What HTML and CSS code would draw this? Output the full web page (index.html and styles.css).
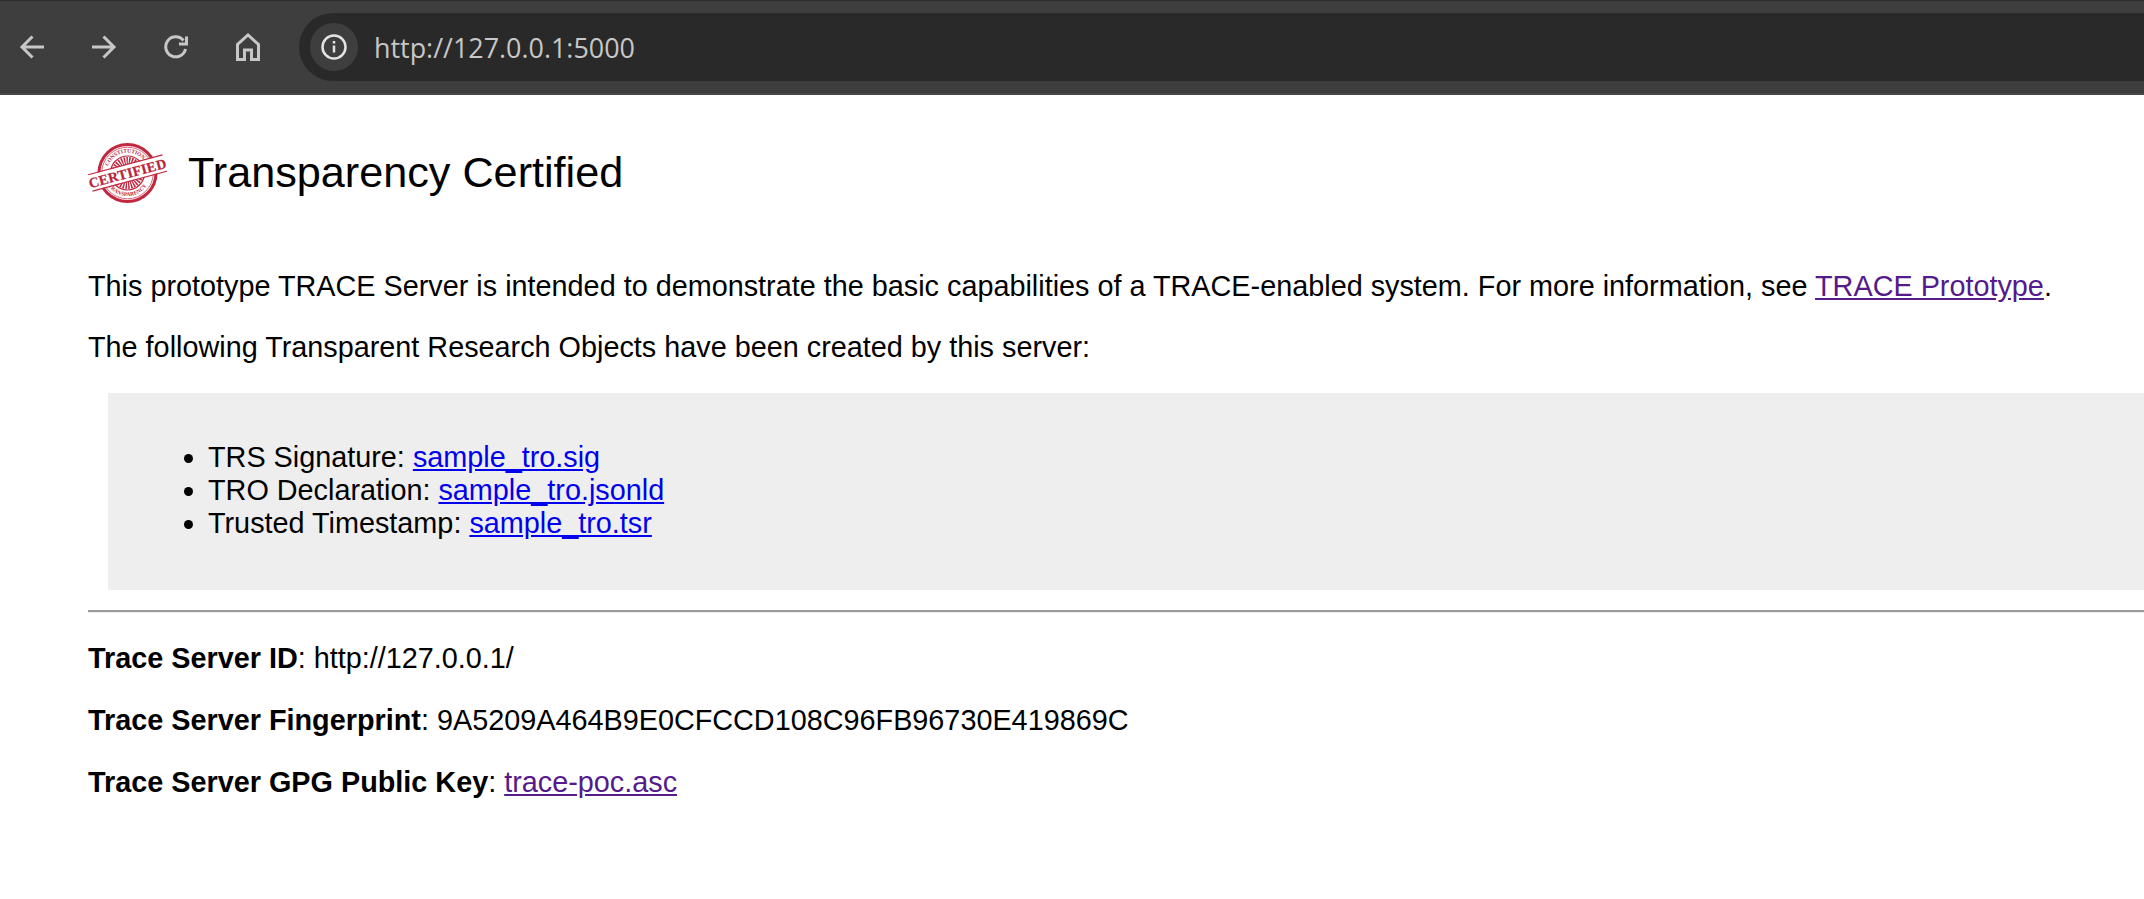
FILE: index.html
```html
<!DOCTYPE html>
<html lang="en">
<head>
<meta charset="utf-8">
<title>Transparency Certified</title>
<link rel="stylesheet" href="styles.css">
</head>
<body>
<header class="toolbar">
  <nav class="nav-icons">
    <svg class="nav-icon" viewBox="0 0 28 28"><path d="M26 14H5M14.500 3.500 4 14l10.500 10.500"/></svg>
    <svg class="nav-icon" viewBox="0 0 28 28"><path d="M2 14h21M13.500 3.500 24 14 13.500 24.500"/></svg>
    <svg class="nav-icon" viewBox="0 0 28 28"><path d="M21.500 7.500A10 10 0 1 0 23.500 16M24.500 3.500v7.500h-7.500"/></svg>
    <svg class="nav-icon" viewBox="0 0 28 28"><path d="M3.500 26.500V11.500L14 2 24.500 11.500V26.500H17.500V17H10.500V26.500Z"/></svg>
  </nav>
  <div class="urlbar">
    <span class="info"><svg class="info-icon" viewBox="0 0 28 28"><circle cx="14" cy="14" r="11.500"/><path d="M14 12.500v7M14 8v2.500"/></svg></span>
    <span class="url">http://127.0.0.1:5000</span>
  </div>
</header>
<main class="content">
  <div class="title-row">
    <svg class="seal" viewBox="0 0 80 70">
      <circle class="seal-ring" cx="39.500" cy="35" r="28.500"/>
      <circle class="seal-ring-thin" cx="39.500" cy="35" r="25.800"/>
      <circle class="seal-ring-inner" cx="39.500" cy="35" r="17"/>
      <circle class="seal-rays" cx="39.500" cy="35" r="10"/>
      <circle class="seal-core" cx="39.500" cy="35" r="4"/>
      <path id="seal-top" class="seal-arc" d="M19 35a20.500 20.500 0 0 1 41 0"/>
      <path id="seal-bottom" class="seal-arc" d="M16.500 35a23 23 0 0 0 46 0"/>
      <text class="seal-small"><textPath href="#seal-top" startOffset="50%" text-anchor="middle">CONSTITUTIONAL</textPath></text>
      <text class="seal-small"><textPath href="#seal-bottom" startOffset="50%" text-anchor="middle">TRANSPARENCY</textPath></text>
      <g transform="rotate(-15 39.500 35)">
        <rect class="seal-band" x="2" y="27" width="75" height="16"/>
        <path class="seal-line" d="M1 26.500h77M1 43.500h77"/>
        <text class="seal-text" x="39.500" y="40" text-anchor="middle">CERTIFIED</text>
      </g>
    </svg>
    <h1 class="title">Transparency Certified</h1>
  </div>
  <p class="para intro">This prototype TRACE Server is intended to demonstrate the basic capabilities of a TRACE-enabled system. For more information, see <a class="visited" href="#a">TRACE Prototype</a>.</p>
  <p class="para">The following Transparent Research Objects have been created by this server:</p>
  <div class="panel">
    <ul class="files">
      <li>TRS Signature: <a class="fresh" href="#b">sample_tro.sig</a></li>
      <li>TRO Declaration: <a class="fresh" href="#c">sample_tro.jsonld</a></li>
      <li>Trusted Timestamp: <a class="fresh" href="#d">sample_tro.tsr</a></li>
    </ul>
  </div>
  <hr class="rule">
  <p class="para"><strong>Trace Server ID</strong>: http://127.0.0.1/</p>
  <p class="para"><strong>Trace Server Fingerprint</strong>: 9A5209A464B9E0CFCCD108C96FB96730E419869C</p>
  <p class="para"><strong>Trace Server GPG Public Key</strong>: <a class="visited" href="#e">trace-poc.asc</a></p>
</main>
</body>
</html>
```
FILE: styles.css
```css
html, body { margin: 0; padding: 0; background: #fff; overflow: hidden; }
body { font-family: "Liberation Sans", Arial, sans-serif; font-size: 28.8px; line-height: 33px; color: #000; width: 2144px; height: 899px; }
.toolbar { height: 95px; box-sizing: border-box; background: #3e3e3e; border-top: 1px solid #2b2b2b; border-bottom: 2px solid #474747; padding-top: 12px; display: flex; align-items: flex-start; }
.nav-icons { display: flex; gap: 44px; padding: 20px 0 0 18px; width: 299px; box-sizing: border-box; flex: none; }
.nav-icon { width: 28px; height: 28px; fill: none; stroke: #c7c7c7; stroke-width: 3; flex: none; }
.urlbar { flex: 1; height: 68px; background: #292929; border-radius: 34px 0 0 34px; display: flex; align-items: center; padding-left: 11px; }
.info { width: 48px; height: 48px; border-radius: 50%; background: #3e3e3e; display: flex; align-items: center; justify-content: center; }
.info-icon { width: 28px; height: 28px; fill: none; stroke: #e3e3e3; stroke-width: 2.500; }
.url { margin-left: 16px; font-family: "Open Sans", sans-serif; font-size: 26.9px; color: #c7c7c7; }
.content { padding: 0 0 0 88px; }
.title-row { display: flex; align-items: center; height: 90px; margin-top: 33px; gap: 20px; }
.seal { width: 80px; height: 70px; flex: none; }
.seal-ring { fill: none; stroke: #c1283f; stroke-width: 3; }
.seal-ring-thin { fill: none; stroke: #d9677a; stroke-width: 1; }
.seal-ring-inner { fill: none; stroke: #c1283f; stroke-width: 1.200; }
.seal-rays { fill: none; stroke: #c1283f; stroke-width: 12; stroke-dasharray: 1.100 .9; }
.seal-core { fill: #c1283f; }
.seal-arc { fill: none; }
.seal-small { font-family: "Liberation Serif", serif; font-weight: bold; font-size: 5.500px; fill: #b9263c; }
.seal-band { fill: #fff; }
.seal-line { stroke: #c1283f; stroke-width: 1.200; fill: none; }
.seal-text { font-family: "Liberation Serif", serif; font-weight: bold; font-size: 14px; fill: #b9263c; stroke: #b9263c; stroke-width: .25; letter-spacing: .3px; }
.title { margin: 0 0 2px; font-size: 43.2px; font-weight: normal; line-height: 50px; }
.para { margin: 0 0 28.8px; white-space: nowrap; }
.intro { margin-top: 51.600px; }
.visited { color: #551a8b; }
.fresh { color: #0000ee; }
.panel { background: #eee; margin: 0 0 20px 20px; padding: 48px 0 0; height: 197px; box-sizing: border-box; }
.files { margin: 0; padding: 0 0 0 100px; }
.rule { margin: 0 0 29px; border: 0; border-top: 2px solid #9a9a9a; border-bottom: 1px solid #eee; }
```
